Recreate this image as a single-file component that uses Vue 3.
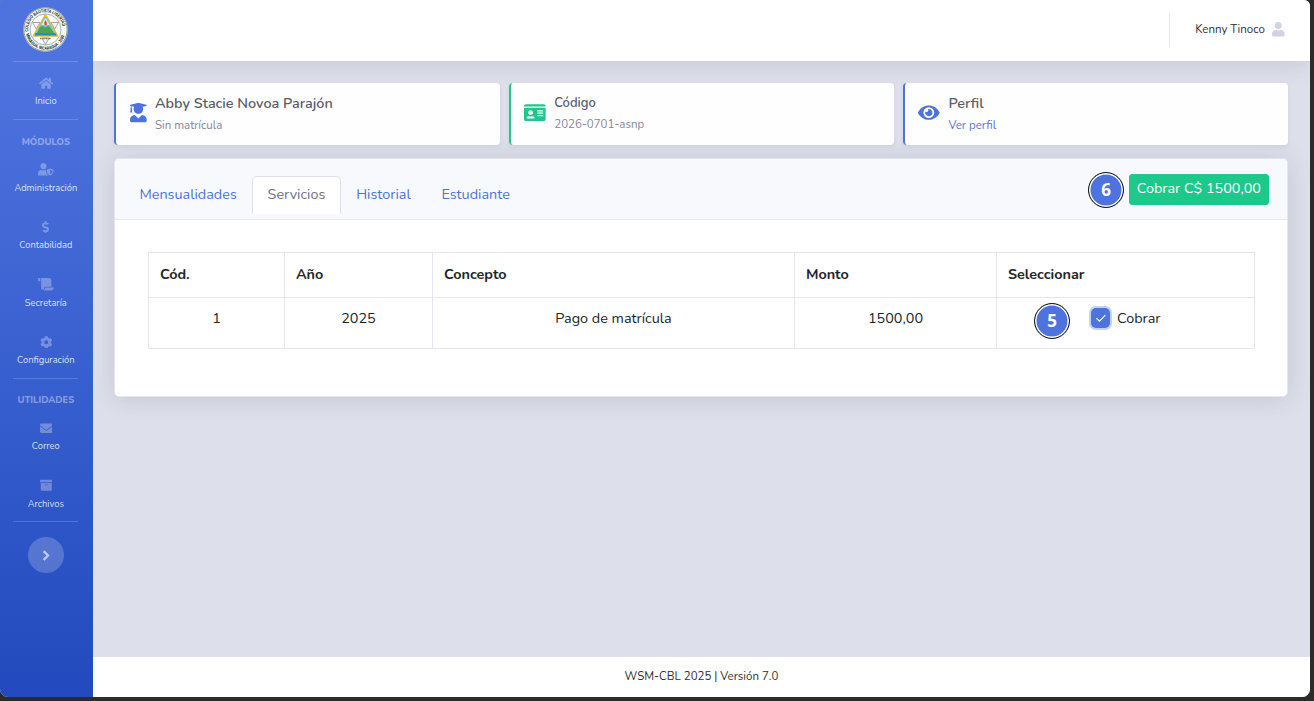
<script setup>
const icons = {
  home: [576, 'M280.37 148.26L96 300.11V464a16 16 0 0 0 16 16l112.06-.29a16 16 0 0 0 15.92-16V368a16 16 0 0 1 16-16h64a16 16 0 0 1 16 16v95.64a16 16 0 0 0 16 16.05L464 480a16 16 0 0 0 16-16V300L295.67 148.26a12.19 12.19 0 0 0-15.3 0zM571.6 251.47L488 182.56V44.05a12 12 0 0 0-12-12h-56a12 12 0 0 0-12 12v72.61L318.47 43a48 48 0 0 0-61 0L4.34 251.47a12 12 0 0 0-1.6 16.9l25.5 31A12 12 0 0 0 45.15 301l235.22-193.74a12.19 12.19 0 0 1 15.3 0L530.9 301a12 12 0 0 0 16.9-1.6l25.5-31a12 12 0 0 0-1.7-16.93z'],
  userShield: [640, 'M622.3 271.1l-115.2-45c-4.1-1.6-12.6-3.7-22.2 0l-115.2 45c-10.7 4.2-17.7 14-17.7 24.9 0 111.6 68.7 188.8 132.9 213.9 9.6 3.7 18 1.6 22.2 0C558.4 489.9 640 420.5 640 296c0-10.9-7-20.7-17.7-24.9zM496 462.4V273.3l95.5 37.3c-5.6 87.1-60.9 135.4-95.5 151.8zM224 256c70.7 0 128-57.3 128-128S294.7 0 224 0 96 57.3 96 128s57.3 128 128 128zm96 40c0-2.5.8-4.8 1.1-7.2-2.5-.1-4.9-.8-7.5-.8h-16.7c-22.2 10.2-46.9 16-72.9 16s-50.6-5.8-72.9-16h-16.7C60.2 288 0 348.2 0 422.4V464c0 26.5 21.5 48 48 48h352c6.8 0 13.3-1.5 19.2-4-54-42.9-99.2-116.7-99.2-212z'],
  dollar: [288, 'M209.2 233.4l-108-31.6C88.7 198.2 80 186.5 80 173.5c0-16.3 13.2-29.5 29.5-29.5h66.3c12.2 0 24.2 3.7 34.2 10.5 6.1 4.1 14.3 3.1 19.5-2l34.8-34c7.1-6.9 6.1-18.4-1.8-24.5C238 74.8 207.4 64.1 176 64V16c0-8.8-7.2-16-16-16h-32c-8.8 0-16 7.2-16 16v48h-2.5C45.8 64-5.4 118.7.5 183.6c4.2 46.1 39.4 83.6 83.8 96.6l102.5 30c12.5 3.7 21.2 15.3 21.2 28.3 0 16.3-13.2 29.5-29.5 29.5h-66.3C100 368 88 364.3 78 357.5c-6.1-4.1-14.3-3.1-19.5 2l-34.8 34c-7.1 6.9-6.1 18.4 1.8 24.5 24.5 19.2 55.1 29.9 86.5 30v48c0 8.8 7.2 16 16 16h32c8.8 0 16-7.2 16-16v-48.2c46.6-.9 90.3-28.6 105.7-72.7 21.5-61.6-14.6-124.8-72.5-141.7z'],
  scroll: [640, 'M48 0C21.53 0 0 21.53 0 48v64c0 8.84 7.16 16 16 16h80V48C96 21.53 74.47 0 48 0zm208 412.57V352h288V96c0-52.94-43.06-96-96-96H111.59C121.74 13.41 128 29.92 128 48v368c0 38.87 34.65 69.65 74.75 63.12C234.22 474 256 444.46 256 412.57zM288 384v32c0 52.93-43.06 96-96 96h336c61.86 0 112-50.14 112-112 0-8.84-7.16-16-16-16H288z'],
  cog: [512, 'M487.4 315.7l-42.6-24.6c4.3-23.2 4.3-47 0-70.2l42.6-24.6c4.9-2.8 7.1-8.6 5.5-14-11.1-35.6-30-67.8-54.7-94.6-3.8-4.1-10-5.1-14.8-2.3L380.8 110c-17.9-15.4-38.5-27.3-60.8-35.1V25.8c0-5.6-3.9-10.5-9.4-11.7-36.7-8.2-74.3-7.8-109.2 0-5.5 1.2-9.4 6.1-9.4 11.7V75c-22.2 7.9-42.8 19.8-60.8 35.1L88.7 85.5c-4.9-2.8-11-1.9-14.8 2.3-24.7 26.7-43.6 58.9-54.7 94.6-1.7 5.4.6 11.2 5.5 14L67.3 221c-4.3 23.2-4.3 47 0 70.2l-42.6 24.6c-4.9 2.8-7.1 8.6-5.5 14 11.1 35.6 30 67.8 54.7 94.6 3.8 4.1 10 5.1 14.8 2.3l42.6-24.6c17.9 15.4 38.5 27.3 60.8 35.1v49.2c0 5.6 3.9 10.5 9.4 11.7 36.7 8.2 74.3 7.8 109.2 0 5.5-1.2 9.4-6.1 9.4-11.7v-49.2c22.2-7.9 42.8-19.8 60.8-35.1l42.6 24.6c4.9 2.8 11 1.9 14.8-2.3 24.7-26.7 43.6-58.9 54.7-94.6 1.5-5.5-.7-11.3-5.6-14.1zM256 336c-44.1 0-80-35.9-80-80s35.9-80 80-80 80 35.9 80 80-35.9 80-80 80z'],
  envelope: [512, 'M48 64C21.5 64 0 85.5 0 112c0 15.1 7.1 29.3 19.2 38.4L236.8 313.6c11.4 8.5 27 8.5 38.4 0L492.8 150.4c12.1-9.1 19.2-23.3 19.2-38.4c0-26.5-21.5-48-48-48H48zM0 176V384c0 35.3 28.7 64 64 64H448c35.3 0 64-28.7 64-64V176L294.4 339.2c-22.8 17.1-54 17.1-76.8 0L0 176z'],
  archive: [512, 'M32 448c0 17.7 14.3 32 32 32h384c17.7 0 32-14.3 32-32V160H32v288zm160-212c0-6.6 5.4-12 12-12h104c6.6 0 12 5.4 12 12v8c0 6.6-5.4 12-12 12H204c-6.6 0-12-5.4-12-12v-8zM480 32H32C14.3 32 0 46.3 0 64v48c0 8.8 7.2 16 16 16h480c8.8 0 16-7.2 16-16V64c0-17.7-14.3-32-32-32z'],
  user: [448, 'M224 256c70.7 0 128-57.3 128-128S294.7 0 224 0 96 57.3 96 128s57.3 128 128 128zm89.6 32h-16.7c-22.2 10.2-46.9 16-72.9 16s-50.6-5.8-72.9-16h-16.7C60.2 288 0 348.2 0 422.4V464c0 26.5 21.5 48 48 48h352c26.5 0 48-21.5 48-48v-41.6c0-74.2-60.2-134.4-134.4-134.4z'],
  graduate: [448, 'M319.4 320.6L224 416l-95.4-95.4C57.1 323.7 0 382.2 0 454.4v9.6c0 26.5 21.5 48 48 48h352c26.5 0 48-21.5 48-48v-9.6c0-72.2-57.1-130.7-128.6-133.8zM13.6 79.8l6.4 1.5v58.4c-7 4.2-12 11.5-12 20.3 0 8.4 4.6 15.4 11.1 19.7L3.5 242c-1.7 6.9 2.1 14 7.6 14h41.8c5.5 0 9.3-7.1 7.6-14l-15.6-62.3C51.4 175.4 56 168.4 56 160c0-8.8-5-16.1-12-20.3V87.1l66 15.9c-8.6 17.2-14 36.4-14 57 0 70.7 57.3 128 128 128s128-57.3 128-128c0-20.6-5.3-39.8-14-57l96.3-23.2c18.2-4.4 18.2-27.1 0-31.5l-190.4-46c-13-3.1-26.7-3.1-39.7 0L13.6 48.2c-18.1 4.4-18.1 27.2 0 31.6z'],
  idCard: [576, 'M528 32H48C21.5 32 0 53.5 0 80v16h576V80c0-26.5-21.5-48-48-48zM0 432c0 26.5 21.5 48 48 48h480c26.5 0 48-21.5 48-48V128H0v304zm352-232c0-4.4 3.6-8 8-8h144c4.4 0 8 3.6 8 8v16c0 4.4-3.6 8-8 8H360c-4.4 0-8-3.6-8-8v-16zm0 64c0-4.4 3.6-8 8-8h144c4.4 0 8 3.6 8 8v16c0 4.4-3.6 8-8 8H360c-4.4 0-8-3.6-8-8v-16zm0 64c0-4.4 3.6-8 8-8h144c4.4 0 8 3.6 8 8v16c0 4.4-3.6 8-8 8H360c-4.4 0-8-3.6-8-8v-16zM176 192c35.3 0 64 28.7 64 64s-28.7 64-64 64-64-28.7-64-64 28.7-64 64-64zM67.1 396.2C75.5 370.5 99.6 352 128 352h8.2c12.3 5.1 25.7 8 39.8 8s27.6-2.9 39.8-8h8.2c28.4 0 52.5 18.5 60.9 44.2 3.2 9.9-5.2 19.8-15.6 19.8H82.7c-10.4 0-18.8-10-15.6-19.8z'],
  eye: [576, 'M572.52 241.4C518.29 135.59 410.93 64 288 64S57.68 135.64 3.48 241.41a32.35 32.35 0 0 0 0 29.19C57.71 376.41 165.07 448 288 448s230.32-71.64 284.52-177.41a32.35 32.35 0 0 0 0-29.19zM288 400a144 144 0 1 1 144-144 143.93 143.93 0 0 1-144 144zm0-240a95.31 95.31 0 0 0-25.31 3.79 47.85 47.85 0 0 1-66.9 66.9A95.78 95.78 0 1 0 288 160z'],
}

const groups = [
  { items: [{ label: 'Inicio', icon: 'home' }] },
  {
    title: 'MÓDULOS',
    items: [
      { label: 'Administración', icon: 'userShield' },
      { label: 'Contabilidad', icon: 'dollar' },
      { label: 'Secretaría', icon: 'scroll' },
      { label: 'Configuración', icon: 'cog' },
    ],
  },
  {
    title: 'UTILIDADES',
    items: [
      { label: 'Correo', icon: 'envelope' },
      { label: 'Archivos', icon: 'archive' },
    ],
  },
]

const cards = [
  { kind: 'student', icon: 'graduate', title: 'Abby Stacie Novoa Parajón', sub: 'Sin matrícula' },
  { kind: 'code', icon: 'idCard', title: 'Código', sub: '2026-0701-asnp' },
  { kind: 'profile', icon: 'eye', title: 'Perfil', sub: 'Ver perfil' },
]

const tabs = ['Mensualidades', 'Servicios', 'Historial', 'Estudiante']
const columns = ['Cód.', 'Año', 'Concepto', 'Monto', 'Seleccionar']
const row = ['1', '2025', 'Pago de matrícula', '1500,00']
const box = (name) => `0 0 ${icons[name][0]} 512`
</script>

<template>
  <div class="desktop">
    <div class="window">
      <aside class="sidebar">
        <div class="brand">
          <svg class="logo" viewBox="0 0 90 90">
            <defs>
              <path id="ringTop" d="M10.5 49a34.700 34.700 0 1 1 69 0" />
              <path id="ringBottom" d="M6 54a39.900 39.900 0 0 0 78 0" />
            </defs>
            <circle cx="45" cy="45" r="44.500" fill="#f5f8f4" />
            <circle cx="45" cy="45" r="43.300" fill="none" stroke="#47705b" stroke-width="1.300" />
            <circle cx="45" cy="45" r="31" fill="#fff" stroke="#5d8272" stroke-width="1.200" />
            <text class="ring"><textPath href="#ringTop" textLength="106" lengthAdjust="spacingAndGlyphs">COLEGIO BAUTISTA LIBERTAD</textPath></text>
            <text class="ring"><textPath href="#ringBottom" textLength="104" lengthAdjust="spacingAndGlyphs">MANAGUA, NICARAGUA · 2000</textPath></text>
            <path d="M19 31h15l-7.500 13zM56 31h15l-7.500 13zM37.500 62h15l-7.500 13z" fill="#f4f4f4" stroke="#8b8b8b" stroke-width="1.600" />
            <path d="M45 15L69.500 58h-49z" fill="#70c8e8" stroke="#e5be2f" stroke-width="3" stroke-linejoin="round" />
            <path d="M45 22l8 14H37z" fill="#e6f4f8" />
            <path d="M42.500 31l2.500-5 2.500 5v5h-5z" fill="#dc493a" />
            <path d="M33 41l6-4 5 4 7-4 8 10 5 9H26z" fill="#4ba653" />
            <path d="M25 52h40l2 5H23z" fill="#278fbd" />
            <path d="M34 63h22" stroke="#777" stroke-width="3" stroke-dasharray="2 1" />
          </svg>
        </div>
        <nav v-for="(group, gi) in groups" :key="gi" class="group">
          <h6 v-if="group.title">{{ group.title }}</h6>
          <a v-for="item in group.items" :key="item.label" class="item">
            <svg :viewBox="box(item.icon)"><path :d="icons[item.icon][1]" /></svg>
            <span>{{ item.label }}</span>
          </a>
        </nav>
        <div class="toggle-wrap">
          <button class="toggle" aria-label="Expandir">
            <svg viewBox="0 0 10 12"><path d="M3.300 2l4 4-4 4" /></svg>
          </button>
        </div>
      </aside>

      <div class="content">
        <header class="topbar">
          <div class="user">
            <span>Kenny Tinoco</span>
            <svg :viewBox="box('user')"><path :d="icons.user[1]" /></svg>
          </div>
        </header>

        <main>
          <section class="cards">
            <article v-for="c in cards" :key="c.kind" class="card" :class="c.kind">
              <svg :viewBox="box(c.icon)"><path :d="icons[c.icon][1]" /></svg>
              <div class="lines">
                <h5>{{ c.title }}</h5>
                <p>{{ c.sub }}</p>
              </div>
            </article>
          </section>

          <section class="panel">
            <div class="panel-head">
              <div class="tabs">
                <a v-for="t in tabs" :key="t" :class="{ active: t === 'Servicios' }">{{ t }}</a>
              </div>
              <div class="action">
                <span class="step step-six">6</span>
                <button class="charge">Cobrar C$ 1500,00</button>
              </div>
            </div>
            <div class="panel-body">
              <table>
                <colgroup><col class="c1" /><col class="c2" /><col class="c3" /><col class="c4" /><col class="c5" /></colgroup>
                <thead>
                  <tr><th v-for="c in columns" :key="c">{{ c }}</th></tr>
                </thead>
                <tbody>
                  <tr>
                    <td v-for="v in row" :key="v">{{ v }}</td>
                    <td class="select">
                      <span class="step step-five">5</span>
                      <label>
                        <span class="check"><svg viewBox="0 0 20 20"><path d="M5.500 10.300l3.200 3.200 6-6.200" /></svg></span>
                        Cobrar
                      </label>
                    </td>
                  </tr>
                </tbody>
              </table>
            </div>
          </section>
        </main>

        <footer>WSM-CBL 2025 | Versión 7.0</footer>
      </div>
    </div>
  </div>
</template>

<style>
body { margin: 0; background: #2b2b2b; }
</style>

<style scoped>
* { box-sizing: border-box; }
.desktop {
  width: 1314px; height: 701px; overflow: hidden; background: #2b2b2b;
  font: 400 14.4px/21.6px Nunito, Lato, sans-serif; color: #212529;
}
.window {
  width: 1310px; height: 697px; display: flex; overflow: hidden;
  border-radius: 2px 6px 8px 8px; background: #dddfeb;
}
.sidebar {
  width: 93px; flex: none; padding-right: 1.4px;
  background: linear-gradient(180deg, #4e73df 10%, #224abe 100%);
}
.brand { height: 61px; display: flex; justify-content: center; padding-top: 7px; }
.logo { width: 45px; height: 45px; }
.ring { font: 700 9px "Liberation Sans", sans-serif; fill: #14201a; }
.group {
  border-top: 1px solid transparent; display: flex; flex-direction: column;
  background: linear-gradient(rgba(255, 255, 255, .17), rgba(255, 255, 255, .17)) 13px 0 / 65px 1px no-repeat border-box;
}
.group:nth-of-type(1) { height: 58px; }
.group:nth-of-type(2) { height: 259px; }
.group:nth-of-type(3) { height: 143px; }
h6 {
  margin: 0; height: 28px; padding-top: 15px; flex: none; text-align: center;
  font-size: 9.36px; line-height: 14px; font-weight: 800; color: rgba(255, 255, 255, .4);
}
.group:nth-of-type(3) h6 { height: 27.6px; padding-top: 14px; }
.item { height: 57.5px; flex: none; padding-top: 15.2px; display: flex; flex-direction: column; align-items: center; }
.item svg { height: 12.6px; fill: rgba(255, 255, 255, .3); }
.item span { margin-top: 5px; font-size: 9.36px; line-height: 14px; color: rgba(255, 255, 255, .8); }
.group:nth-of-type(1) .item span { margin-top: 4.7px; }
.toggle-wrap {
  display: flex; justify-content: center; padding-top: 16px;
  background: linear-gradient(rgba(255, 255, 255, .17), rgba(255, 255, 255, .17)) 13px 0 / 65px 1px no-repeat;
}
.toggle {
  width: 36px; height: 36px; border: 0; padding: 0; border-radius: 50%;
  background: rgba(255, 255, 255, .2); display: flex; align-items: center; justify-content: center;
}
.toggle svg { width: 11px; height: 13px; fill: none; stroke: rgba(255, 255, 255, .6); stroke-width: 2.2; }

.content { flex: 1; display: flex; flex-direction: column; overflow: hidden; }
.topbar {
  height: 61px; flex: none; background: #fff; display: flex; justify-content: flex-end;
  padding: 12px 25px 14px 0; box-shadow: 0 2px 25px rgba(58, 59, 69, .15);
}
.user {
  display: flex; align-items: center; gap: 7.6px; border-left: 1px solid #e3e6f0;
  padding-left: 25px; font-size: 11.52px; line-height: 17px; color: #2f3034;
}
.user svg { height: 14.4px; fill: #d1d3e2; }
main { flex: 1; padding: 22px 22px 0 21px; }
.cards { display: grid; grid-template-columns: 386px 385px 385px; gap: 9px; }
.card {
  height: 62px; display: flex; align-items: center; background: #fefefe;
  border-left: 2px solid #4e73df; border-radius: 4px; padding-left: 14px;
  box-shadow: 0 2px 4px rgba(58, 59, 69, .07); color: #4e73df;
}
.card > svg { height: 19.2px; fill: currentColor; margin-top: -2px; }
.lines { align-self: flex-start; padding: 9px 0 0 8.200px; }
h5 { margin: 0; font-size: 14.4px; line-height: 22px; font-weight: 600; color: #5a5c69; }
.lines p { margin: 0; font-size: 11.52px; line-height: 22px; color: #858796; }
.code { color: #1cc88a; border-left-color: #1cc88a; padding-left: 13px; }
.code .lines { padding: 8.500px 0 0 8.700px; }
.code .lines p { line-height: 21px; }
.code h5 { font-size: 12.96px; }
.profile { padding-left: 13.3px; }
.profile .lines { padding-left: 8.600px; }
.profile p { color: #4e73df; }

.panel {
  margin-top: 13px; height: 239px; border: 1px solid #e3e6f0; border-radius: 5px;
  background: #fff; box-shadow: 0 2px 25px rgba(58, 59, 69, .15);
}
.panel-head {
  height: 61px; display: flex; justify-content: space-between; padding: 0 18px 0 9.1px;
  background: #f8f9fc; border-bottom: 1px solid #e3e6f0; border-radius: 4px 4px 0 0;
}
.tabs { display: flex; padding-top: 17px; }
.tabs a {
  height: 38px; padding: 7.2px 14.4px; border: 1px solid transparent;
  border-radius: 5px 5px 0 0; color: #4e73df;
}
.tabs .active { color: #6e707e; background: #fff; border-color: #dddfeb #dddfeb #fff; }
.action { position: relative; padding-top: 15px; }
.charge {
  display: block; height: 31px; padding: 0 7px 2px; border: 1px solid #1cc88a; border-radius: 3px;
  background: #1cc88a; color: #fff; font: inherit; white-space: nowrap;
}
.step {
  position: absolute; width: 36px; height: 36px; border-radius: 50%;
  border: 1.500px solid #15161b; background: #4e73df; box-shadow: inset 0 0 0 1.500px #fff;
  color: #fff; font: 700 17px/33px "Open Sans", "Noto Sans", sans-serif; text-align: center;
}
.step-six { left: -40.5px; top: 13px; }
.panel-body { padding: 32px; padding-left: 33px; }
table { width: 1107px; border-collapse: collapse; table-layout: fixed; }
.c1 { width: 136px; }
.c2 { width: 148px; }
.c3 { width: 362px; }
.c4 { width: 202px; }
.c5 { width: 258px; }
th, td { border: 1px solid #e3e6f0; padding: 0 10.9px; }
th { height: 45px; text-align: left; font-weight: 700; }
td { height: 51px; padding-bottom: 9px; text-align: center; }
.select { position: relative; }
.step-five { left: 37px; top: 5px; }
label { display: flex; justify-content: center; align-items: center; gap: 7px; }
.check {
  width: 19.500px; height: 19.500px; border-radius: 5px; background: #4e73df;
  box-shadow: 0 0 0 2px #c3d0f7; margin-top: -1px;
}
.check svg { display: block; width: 100%; height: 100%; fill: none; stroke: #fff; stroke-width: 1.1; }
footer {
  height: 40px; flex: none; background: #fff; text-align: center;
  font-size: 11.52px; line-height: 38px; color: #2f3034;
}
</style>
